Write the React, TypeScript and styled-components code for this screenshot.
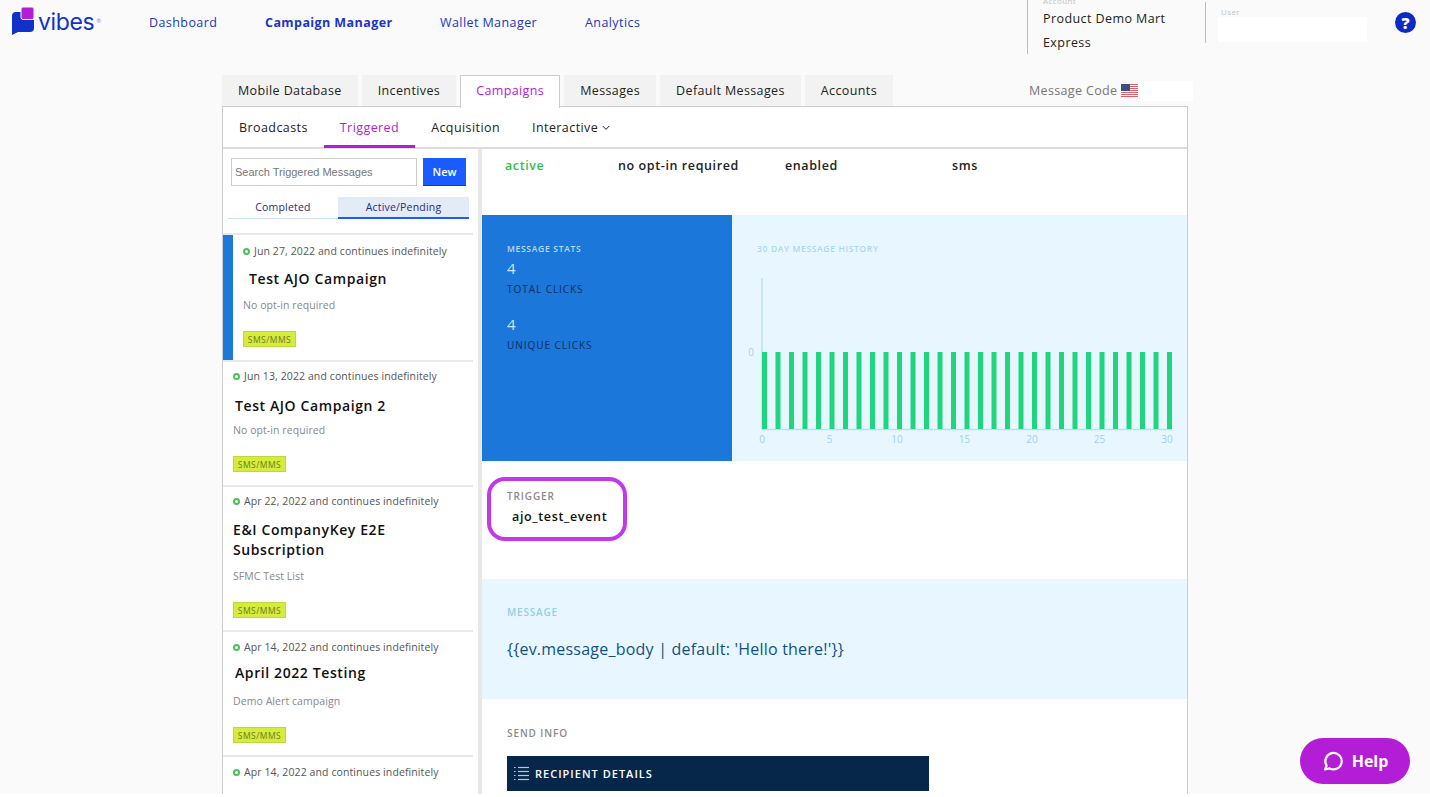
import React from "react";
import styled, { createGlobalStyle } from "styled-components";

const PURPLE = "#b31dd6";
const NAVY_LINK = "#1c35c4";

const navItems = [
  { label: "Dashboard", width: 116 },
  { label: "Campaign Manager", width: 175, bold: true },
  { label: "Wallet Manager", width: 145 },
  { label: "Analytics", width: 60 },
];
const mainTabs = ["Mobile Database", "Incentives", "Campaigns", "Messages", "Default Messages", "Accounts"];
const subTabs = ["Broadcasts", "Triggered", "Acquisition"];

const campaigns = [
  { date: "Jun 27, 2022", title: "Test AJO Campaign", sub: "No opt-in required", indent: 6, selected: true, top: 8, titleGap: 10, subGap: 9, badgeGap: 19, bottom: 13 },
  { date: "Jun 13, 2022", title: "Test AJO Campaign 2", sub: "No opt-in required", indent: 2, top: 6, titleGap: 12, subGap: 7, badgeGap: 19, bottom: 13 },
  { date: "Apr 22, 2022", title: "E&I CompanyKey E2E Subscription", sub: "SFMC Test List", indent: 0, top: 6, titleGap: 11, subGap: 9, badgeGap: 19, bottom: 12 },
  { date: "Apr 14, 2022", title: "April 2022 Testing", sub: "Demo Alert campaign", indent: 2, top: 7, titleGap: 8, subGap: 11, badgeGap: 19, bottom: 12 },
  { date: "Apr 14, 2022", top: 7 },
];

const bars = Array.from({ length: 31 }, (_, i) => i);
const ticks = [0, 5, 10, 15, 20, 25, 30];

const Logo = () => (
  <LogoWrap>
    <svg width="26" height="28" viewBox="0 0 26 28">
      <path d="M0 9 Q0 5 4 5 H12 V13 H22 V21 Q22 25 18 25 H6 L0 28 Z" fill="#1131c9" />
      <rect x="9" y="0" width="13" height="12.5" rx="2" fill={PURPLE} stroke="#fafafa" strokeWidth="1" />
    </svg>
    <LogoText>vibes</LogoText>
    <LogoMark>®</LogoMark>
  </LogoWrap>
);

const Flag = () => (
  <svg width="17" height="13" viewBox="0 0 17 13">
    <rect width="17" height="13" fill="#fff" />
    {[0, 2, 4, 6, 8, 10, 12].map((y) => (
      <rect key={y} y={y} width="17" height="1" fill="#d9636b" />
    ))}
    <rect width="9" height="7" fill="#3b4f86" />
  </svg>
);

const Chart = () => (
  <svg width="455" height="175" viewBox="0 0 455 175">
    <line x1="30" y1="0" x2="30" y2="152" stroke="#bcdff0" strokeWidth="1.5" />
    <line x1="30" y1="151.5" x2="440" y2="151.5" stroke="#bcdff0" strokeWidth="1.5" />
    {bars.map((i) => (
      <rect key={i} x={30 + i * 13.5} y="74" width="5" height="77" fill="#1fd67e" />
    ))}
    <ChartLabel x="19" y="78" textAnchor="middle">0</ChartLabel>
    {ticks.map((t) => (
      <ChartLabel key={t} x={30 + t * 13.5} y="165" textAnchor="middle">{t}</ChartLabel>
    ))}
  </svg>
);

const ListIcon = () => (
  <svg width="15" height="15" viewBox="0 0 15 15" fill="none" stroke="#b9c6d4" strokeWidth="1.2">
    {[1.5, 5.5, 9.5, 13.5].map((y) => (
      <React.Fragment key={y}>
        <line x1="0" y1={y} x2="1.6" y2={y} />
        <line x1="4" y1={y} x2="15" y2={y} />
      </React.Fragment>
    ))}
  </svg>
);

const App = () => {
  return (
    <Page>
      <GlobalStyle />
      <Header>
        <Logo />
        <Nav>
          {navItems.map((n) => (
            <NavLink key={n.label} $bold={n.bold} $width={n.width}>{n.label}</NavLink>
          ))}
        </Nav>
        <AccountBox>
          <AccountLabel>Account</AccountLabel>
          <AccountName>Product Demo Mart Express</AccountName>
        </AccountBox>
        <UserBox>
          <FieldLabel>User</FieldLabel>
          <UserInput />
        </UserBox>
        <HelpIcon>?</HelpIcon>
      </Header>

      <Content>
        <TabBar>
          {mainTabs.map((t) => (
            <MainTab key={t} $active={t === "Campaigns"}>{t}</MainTab>
          ))}
          <MessageCode>
            Message Code <Flag />
            <CodeInput />
          </MessageCode>
        </TabBar>

        <Panel>
          <SubNav>
            {subTabs.map((t) => (
              <SubTab key={t} $active={t === "Triggered"}>{t}</SubTab>
            ))}
            <SubTab>
              Interactive
              <svg width="8" height="6" viewBox="0 0 8 6" fill="none" stroke="#222" strokeWidth="1">
                <path d="M0.8 1 L4 4.4 L7.2 1" />
              </svg>
            </SubTab>
          </SubNav>

          <Columns>
            <Sidebar>
              <SearchRow>
                <SearchInput placeholder="Search Triggered Messages" readOnly />
                <NewButton>New</NewButton>
              </SearchRow>
              <Toggle>
                <ToggleItem>Completed</ToggleItem>
                <ToggleItem $active>Active/Pending</ToggleItem>
              </Toggle>
              {campaigns.map((c, i) => (
                <Card key={i} $selected={c.selected} $top={c.top} $bottom={c.bottom ?? 0}>
                  <DateRow>
                    <StatusDot />
                    {c.date} and continues indefinitely
                  </DateRow>
                  {c.title && (
                    <>
                      <CardTitle $indent={c.indent ?? 0} $gap={c.titleGap ?? 0}>{c.title}</CardTitle>
                      <CardSub $gap={c.subGap ?? 0}>{c.sub}</CardSub>
                      <Badge $gap={c.badgeGap ?? 0}>SMS/MMS</Badge>
                    </>
                  )}
                </Card>
              ))}
            </Sidebar>

            <Main>
              <StatusRow>
                <StatusItem $width={113} $color="#2fbf4f">active</StatusItem>
                <StatusItem $width={167}>no opt-in required</StatusItem>
                <StatusItem $width={167}>enabled</StatusItem>
                <StatusItem>sms</StatusItem>
              </StatusRow>

              <Stats>
                <StatsBlue>
                  <StatsHeading>MESSAGE STATS</StatsHeading>
                  <StatValue>4</StatValue>
                  <StatName>TOTAL CLICKS</StatName>
                  <StatValue $gap={18}>4</StatValue>
                  <StatName>UNIQUE CLICKS</StatName>
                </StatsBlue>
                <StatsChart>
                  <ChartHeading>30 DAY MESSAGE HISTORY</ChartHeading>
                  <Chart />
                </StatsChart>
              </Stats>

              <TriggerSection>
                <TriggerOutline>
                  <SectionLabel>TRIGGER</SectionLabel>
                  <TriggerValue>ajo_test_event</TriggerValue>
                </TriggerOutline>
              </TriggerSection>

              <MessageSection>
                <MessageLabel>MESSAGE</MessageLabel>
                <MessageBody>{"{{ev.message_body | default: 'Hello there!'}}"}</MessageBody>
              </MessageSection>

              <SendInfo>
                <SectionLabel>SEND INFO</SectionLabel>
                <RecipientBar>
                  <ListIcon />
                  RECIPIENT DETAILS
                </RecipientBar>
              </SendInfo>
            </Main>
          </Columns>
        </Panel>
      </Content>

      <HelpButton>
        <svg width="22" height="22" viewBox="0 0 22 22" fill="none" stroke="#fff" strokeWidth="2.2" strokeLinejoin="round">
          <path d="M3 19.5 L4.6 15.6 A8.2 8.2 0 1 1 7.6 18.4 Z" />
        </svg>
        Help
      </HelpButton>
    </Page>
  );
};

const GlobalStyle = createGlobalStyle`
  html, body {
    margin: 0;
    padding: 0;
    background: #fff;
  }
  * {
    box-sizing: border-box;
  }
  body {
    font-family: "Open Sans", "Liberation Sans", sans-serif;
  }
`;

const Page = styled.div`
  height: 794px;
  overflow: hidden;
  background: #fafafa;
`;

const Header = styled.header`
  display: flex;
  align-items: flex-start;
  height: 75px;
  padding-left: 12px;
`;

const LogoWrap = styled.div`
  display: flex;
  align-items: flex-start;
  width: 137px;
  height: 44px;
  padding-top: 7px;
`;

const LogoText = styled.span`
  margin-top: 1px;
  font-family: Inter, sans-serif;
  font-size: 23px;
  font-weight: 400;
  line-height: 28px;
  letter-spacing: -0.4px;
  color: #1131c9;
`;

const LogoMark = styled.span`
  margin: 10px 0 0 2px;
  font-size: 6px;
  line-height: 8px;
  color: #7c8ad8;
`;

const Nav = styled.nav`
  display: flex;
  width: 878px;
  height: 44px;
  align-items: center;
`;

const NavLink = styled.a<{ $bold?: boolean; $width: number }>`
  width: ${(p) => p.$width}px;
  flex: none;
  font-size: 12.5px;
  letter-spacing: 0.42px;
  white-space: nowrap;
  font-weight: ${(p) => (p.$bold ? 700 : 400)};
  color: ${NAVY_LINK};
`;

const AccountBox = styled.div`
  width: 178px;
  height: 54px;
  padding-left: 15px;
  border-left: 1px solid #bbb;
  overflow: hidden;
  flex: none;
`;

const FieldLabel = styled.div`
  font-size: 8px;
  line-height: 8px;
  letter-spacing: 0.4px;
  color: #c4c4c4;
`;

const AccountLabel = styled(FieldLabel)`
  margin-top: -3px;
`;

const AccountName = styled.div`
  width: 140px;
  margin-top: 2px;
  font-size: 12.5px;
  line-height: 24px;
  letter-spacing: 0.42px;
  color: #222;
`;

const UserBox = styled.div`
  width: 175px;
  height: 41px;
  margin-top: 2px;
  padding: 6px 0 0 12px;
  border-left: 1px solid #bbb;
  flex: none;

  ${FieldLabel} {
    margin-left: 3px;
  }
`;

const UserInput = styled.div`
  width: 149px;
  height: 25px;
  margin-top: 1px;
  background: #fff;
`;

const HelpIcon = styled.div`
  display: flex;
  align-items: center;
  justify-content: center;
  width: 21px;
  height: 21px;
  margin: 12px 0 0 15px;
  border-radius: 50%;
  background: #0d2bc4;
  color: #fff;
  font-size: 16px;
  font-weight: 800;
  flex: none;
`;

const Content = styled.div`
  width: 966px;
  margin-left: 222px;
`;

const TabBar = styled.div`
  position: relative;
  z-index: 1;
  display: flex;
  gap: 4px;
  height: 32px;
`;

const MainTab = styled.div<{ $active?: boolean }>`
  height: ${(p) => (p.$active ? "33px" : "31px")};
  padding: 0 ${(p) => (p.$active ? "15px" : "16px")};
  font-size: 12.5px;
  line-height: ${(p) => (p.$active ? "29px" : "31px")};
  letter-spacing: 0.38px;
  white-space: nowrap;
  color: ${(p) => (p.$active ? PURPLE : "#222")};
  background: ${(p) => (p.$active ? "#fff" : "#f2f2f2")};
  border: ${(p) => (p.$active ? "1px solid #ccc" : "none")};
  border-bottom: none;
`;

const MessageCode = styled.div`
  display: flex;
  align-items: center;
  gap: 4px;
  height: 31px;
  margin-left: 132px;
  font-size: 12.5px;
  letter-spacing: 0.35px;
  white-space: nowrap;
  color: #777;
`;

const CodeInput = styled.div`
  width: 53px;
  height: 20px;
  margin-left: -2px;
  background: #fff;
`;

const Panel = styled.div`
  height: 690px;
  margin-top: -1px;
  background: #fff;
  border: 1px solid #ccc;
`;

const SubNav = styled.div`
  display: flex;
  height: 42px;
  border-bottom: 2px solid #ddd;
`;

const SubTab = styled.div<{ $active?: boolean }>`
  display: flex;
  align-items: center;
  gap: 4px;
  height: 41px;
  padding: 3px 16px 0;
  font-size: 12.5px;
  letter-spacing: 0.42px;
  white-space: nowrap;
  color: ${(p) => (p.$active ? PURPLE : "#222")};
  border-bottom: 3px solid ${(p) => (p.$active ? PURPLE : "transparent")};
`;

const Columns = styled.div`
  display: flex;
`;

const Sidebar = styled.aside`
  width: 259px;
  height: 650px;
  overflow: hidden;
  padding-right: 5px;
  border-right: 4px solid #e8e8e8;
  flex: none;
`;

const SearchRow = styled.div`
  display: flex;
  gap: 6px;
  padding: 9px 0 0 8px;
`;

const SearchInput = styled.input`
  width: 186px;
  height: 28px;
  padding: 0 3px;
  border: 1px solid #ccc;
  font-family: "Liberation Sans", sans-serif;
  font-size: 11px;
  outline: none;

  &::placeholder {
    color: #777;
    opacity: 1;
  }
`;

const NewButton = styled.button`
  width: 43px;
  height: 28px;
  padding: 0;
  border: none;
  border-bottom: 1px solid #0f3fb5;
  background: #1a5cff;
  color: #fff;
  font-family: "Open Sans", sans-serif;
  font-size: 11px;
  font-weight: 600;
`;

const Toggle = styled.div`
  display: flex;
  height: 22px;
  margin: 11px 0 14px 5px;
`;

const ToggleItem = styled.div<{ $active?: boolean }>`
  width: ${(p) => (p.$active ? "131px" : "110px")};
  flex: none;
  text-align: center;
  font-size: 10.5px;
  line-height: 20px;
  letter-spacing: 0.2px;
  color: #2b2a80;
  background: ${(p) => (p.$active ? "#e3ebf7" : "transparent")};
  border-bottom: ${(p) => (p.$active ? "2px solid #1a5cff" : "1px solid #cfe0fa")};
`;

const Card = styled.div<{ $selected?: boolean; $top: number; $bottom: number }>`
  padding: ${(p) => p.$top}px 0 ${(p) => p.$bottom}px ${(p) => (p.$selected ? "20px" : "10px")};
  border-top: 2px solid #e8e8e8;
  background: ${(p) =>
    p.$selected ? "linear-gradient(to right, #1e78d8 10px, #fff 10px)" : "#fff"};
`;

const DateRow = styled.div`
  display: flex;
  align-items: center;
  gap: 4px;
  font-size: 10.5px;
  line-height: 16px;
  letter-spacing: 0.1px;
  color: #555;
  white-space: nowrap;
`;

const StatusDot = styled.span`
  width: 7px;
  height: 7px;
  border-radius: 50%;
  border: 2px solid #4cc05a;
  flex: none;
`;

const CardTitle = styled.div<{ $indent: number; $gap: number }>`
  margin-top: ${(p) => p.$gap}px;
  padding-left: ${(p) => p.$indent}px;
  font-size: 14px;
  font-weight: 600;
  line-height: 20px;
  letter-spacing: 0.6px;
  color: #111;
`;

const CardSub = styled.div<{ $gap: number }>`
  margin-top: ${(p) => p.$gap}px;
  font-size: 10.5px;
  line-height: 14px;
  letter-spacing: 0.07px;
  color: #888;
`;

const Badge = styled.div<{ $gap: number }>`
  display: flex;
  align-items: center;
  justify-content: center;
  width: 53px;
  height: 16px;
  margin-top: ${(p) => p.$gap}px;
  border: 1px solid #bfd63c;
  background: #d6ec3c;
  font-size: 8.5px;
  letter-spacing: 0.5px;
  color: #6b7b22;
`;

const Main = styled.main`
  flex: 1;
  min-width: 0;
`;

const StatusRow = styled.div`
  display: flex;
  height: 66px;
  padding: 7px 0 0 23px;
`;

const StatusItem = styled.div<{ $width?: number; $color?: string }>`
  width: ${(p) => (p.$width ? `${p.$width}px` : "auto")};
  font-size: 12.5px;
  font-weight: 600;
  line-height: 20px;
  letter-spacing: 0.6px;
  color: ${(p) => p.$color ?? "#222"};
`;

const Stats = styled.section`
  display: flex;
  height: 246px;
`;

const StatsBlue = styled.div`
  width: 250px;
  padding: 28px 25px 0;
  background: #1b77d9;
  flex: none;
`;

const StatsHeading = styled.div`
  font-size: 8.5px;
  line-height: 12px;
  letter-spacing: 0.7px;
  font-weight: 600;
  color: #b6dcf5;
`;

const StatValue = styled.div<{ $gap?: number }>`
  margin-top: ${(p) => p.$gap ?? 4}px;
  font-size: 15px;
  line-height: 18px;
  color: #cfe6f8;
`;

const StatName = styled.div`
  margin-top: 4px;
  font-size: 10px;
  line-height: 16px;
  letter-spacing: 0.95px;
  color: #0c2f63;
`;

const StatsChart = styled.div`
  flex: 1;
  padding: 28px 0 0 0;
  background: #e8f7ff;
`;

const ChartHeading = styled.div`
  margin: 0 0 23px 25px;
  font-size: 8.5px;
  line-height: 12px;
  letter-spacing: 0.65px;
  font-weight: 600;
  color: #a9d8ee;
`;

const ChartLabel = styled.text`
  font-family: "Open Sans", sans-serif;
  font-size: 10px;
  fill: #a0cfe8;
`;

const TriggerSection = styled.section`
  height: 118px;
  padding: 16px 0 0 5px;
`;

const TriggerOutline = styled.div`
  width: 140px;
  height: 64px;
  padding: 8px 0 0 16px;
  border: 4px solid #c238ea;
  border-radius: 18px;
`;

const SectionLabel = styled.div`
  font-size: 10px;
  font-weight: 600;
  line-height: 14px;
  letter-spacing: 0.9px;
  color: #8a8a8a;
`;

const TriggerValue = styled.div`
  margin: 5px 0 0 5px;
  font-size: 12.5px;
  font-weight: 600;
  line-height: 18px;
  letter-spacing: 0.65px;
  color: #111;
`;

const MessageSection = styled.section`
  height: 120px;
  padding: 26px 25px 0;
  background: #e8f7ff;
`;

const MessageLabel = styled.div`
  font-size: 10px;
  font-weight: 600;
  line-height: 14px;
  letter-spacing: 0.8px;
  color: #8fd0ec;
`;

const MessageBody = styled.div`
  margin-top: 19px;
  font-size: 16px;
  line-height: 22px;
  letter-spacing: 0.22px;
  color: #14507f;
`;

const SendInfo = styled.section`
  padding: 27px 25px 0;
`;

const RecipientBar = styled.div`
  display: flex;
  align-items: center;
  gap: 6px;
  width: 422px;
  height: 35px;
  margin-top: 16px;
  padding-left: 7px;
  background: #07274a;
  color: #fff;
  font-size: 11px;
  font-weight: 600;
  letter-spacing: 1.02px;
`;

const HelpButton = styled.div`
  position: fixed;
  left: 1300px;
  top: 738px;
  display: flex;
  align-items: center;
  justify-content: center;
  gap: 8px;
  width: 110px;
  height: 46px;
  border-radius: 23px;
  background: ${PURPLE};
  color: #fff;
  font-size: 16px;
  font-weight: 700;
`;

export default App;
